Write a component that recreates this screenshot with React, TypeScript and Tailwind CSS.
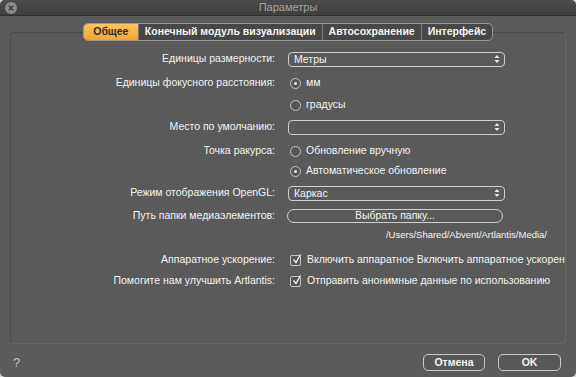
import React from 'react'

const font = { fontFamily: '"Liberation Sans", Arial, sans-serif' }

const tabs = ['Общее', 'Конечный модуль визуализации', 'Автосохранение', 'Интерфейс']

function Row({ label, className, children }: { label?: string, className: string, children?: React.ReactNode }) {
  return (
    <div className={`flex items-center ${className}`}>
      <div className="w-[265px] shrink-0 text-right pr-[1px]">{label}</div>
      <div className="ml-[12px] flex flex-1 items-center min-w-0">{children}</div>
    </div>
  )
}

function Popup({ value }: { value?: string }) {
  return (
    <div className="flex h-[15px] w-[217px] items-center justify-between rounded-[4px] border border-[#cfcfcf] pl-[5px] pr-[4px]">
      <span className="leading-none">{value}</span>
      <svg width="6" height="10" viewBox="0 0 6 10">
        <path d="M3 1 L5.5 4 L0.5 4 Z" fill="#e8e8e8" />
        <path d="M3 9 L5.5 6 L0.5 6 Z" fill="#e8e8e8" />
      </svg>
    </div>
  )
}

function Radio({ checked, label }: { checked?: boolean, label: string }) {
  return (
    <div className="ml-[2px] flex items-center gap-[5px]">
      <div className="flex h-[11px] w-[11px] items-center justify-center rounded-full border border-[#c4c4c4] bg-[#555555]">
        {checked && <div className="h-[3px] w-[3px] rounded-full bg-[#e6e6e6]" />}
      </div>
      <span>{label}</span>
    </div>
  )
}

function Check({ label }: { label: string }) {
  return (
    <div className="ml-[2px] flex min-w-0 items-center gap-[6px]">
      <div className="relative h-[11px] w-[11px] shrink-0 rounded-[2px] border border-[#c4c4c4] bg-[#555555]">
        <svg className="absolute -top-[3px] left-[1px]" width="10" height="12" viewBox="0 0 10 12">
          <path d="M1.5 6.5 L4 9.5 L8.5 1.5" stroke="#eeeeee" strokeWidth="1.4" fill="none" />
        </svg>
      </div>
      <span className="whitespace-nowrap">{label}</span>
    </div>
  )
}

export default function App() {
  return (
    <div className="h-[377px] w-[576px] bg-[#d8d8d8]" style={font}>
      <div className="flex h-full w-full flex-col overflow-hidden rounded-[5px] bg-[#5b5b5b] text-[10.5px] text-[#f4f4f4]">
        {/* Title bar */}
        <div className="relative flex h-[16px] shrink-0 items-center justify-center border-b border-[#2e2e2e] bg-gradient-to-b from-[#4c4c4c] to-[#3e3e3e]">
          <div className="absolute left-[5px] top-[2px] flex h-[12px] w-[12px] items-center justify-center rounded-full bg-[#8c8c8c]">
            <svg width="6" height="6" viewBox="0 0 6 6">
              <path d="M0.8 0.8 L5.2 5.2 M5.2 0.8 L0.8 5.2" stroke="#3a3a3a" strokeWidth="1.5" />
            </svg>
          </div>
          <span className="text-[11px] text-[#a3a3a3]">Параметры</span>
        </div>

        {/* Tabs */}
        <div className="relative z-10 mt-[7px] flex justify-center">
          <div className="flex h-[18px] overflow-hidden rounded-[5px] border border-[#9a9a9a] bg-[#474747] font-bold">
            {tabs.map((t, i) => (
              <div
                key={t}
                className={`flex items-center px-[6px] ${i === 0 ? 'w-[54px] justify-center bg-gradient-to-b from-[#ffc55a] to-[#f2a431] text-[#2a2a2a]' : 'border-l border-[#7a7a7a]'}`}
              >
                {t}
              </div>
            ))}
          </div>
        </div>

        {/* Panel */}
        <div className="mx-[10px] -mt-[9px] flex h-[312px] flex-col rounded-[4px] border border-[#4c4c4c] border-b-[#666666] border-r-[#666666] bg-[#5a5a5a] pt-[16px]">
          <Row label="Единицы размерности:" className="h-[20px]">
            <Popup value="Метры" />
          </Row>
          <Row label="Единицы фокусного расстояния:" className="mt-[4px] h-[20px]">
            <Radio checked label="мм" />
          </Row>
          <Row className="mt-[2px] h-[20px]">
            <Radio label="градусы" />
          </Row>
          <Row label="Место по умолчанию:" className="mt-[2px] h-[20px]">
            <Popup />
          </Row>
          <Row label="Точка ракурса:" className="mt-[4px] h-[20px]">
            <Radio label="Обновление вручную" />
          </Row>
          <Row className="h-[20px]">
            <Radio checked label="Автоматическое обновление" />
          </Row>
          <Row label="Режим отображения OpenGL:" className="mt-[2px] h-[20px]">
            <Popup value="Каркас" />
          </Row>
          <Row label="Путь папки медиаэлементов:" className="mt-[3px] h-[20px]">
            <div className="-ml-[1px] flex h-[14px] w-[216px] items-center justify-center rounded-full border border-[#cfcfcf]">
              Выбрать папку...
            </div>
          </Row>
          <Row className="h-[18px]">
            <div className="w-[259px] text-right text-[9.5px]">/Users/Shared/Abvent/Artlantis/Media/</div>
          </Row>
          <Row label="Аппаратное ускорение:" className="mt-[6px] h-[20px]">
            <Check label="Включить аппаратное Включить аппаратное ускорен" />
          </Row>
          <Row label="Помогите нам улучшить Artlantis:" className="mt-[1px] h-[20px]">
            <Check label="Отправить анонимные данные по использованию" />
          </Row>
        </div>

        {/* Footer */}
        <div className="flex items-center px-[12px] pt-[9px]">
          <span className="ml-[1px] text-[13px] text-[#c8c8c8]">?</span>
          <div className="ml-auto flex gap-[13px] pr-[3px] font-bold">
            <button className="flex h-[17px] w-[62px] items-center justify-center rounded-[5px] border border-[#c8c8c8] bg-[#585858]">
              Отмена
            </button>
            <button className="flex h-[17px] w-[63px] items-center justify-center rounded-[5px] border border-[#c8c8c8] bg-[#585858]">
              OK
            </button>
          </div>
        </div>
      </div>
    </div>
  )
}
